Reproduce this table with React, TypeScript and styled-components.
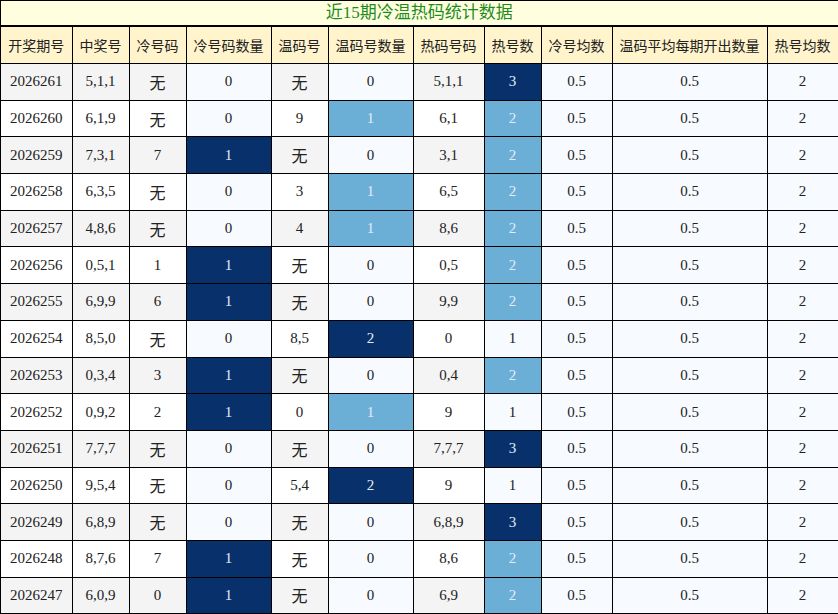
import React from "react";
import styled, { createGlobalStyle } from "styled-components";

const Global = createGlobalStyle`
  html, body { margin: 0; padding: 0; background: #fff; }
  body { font-family: "Liberation Serif", "Noto Sans CJK SC", serif; }
`;

const Table = styled.table`
  width: 838px;
  border-collapse: collapse;
  table-layout: fixed;
  font-family: "Liberation Serif", "Noto Sans CJK SC", serif;
  font-size: 15px;
  color: #222;
`;

const TitleCell = styled.th`
  height: 24px;
  padding: 0;
  background: #ffffe0;
  color: #1c8c1c;
  font-weight: normal;
  font-size: 17px;
  line-height: 24px;
  border: 1px solid #000;
  border-bottom-width: 2px;
  text-align: center;
  vertical-align: middle;
`;

const HeadCell = styled.th`
  height: 36px;
  padding: 0;
  background: #fff4cc;
  font-family: "Noto Sans CJK SC", sans-serif;
  font-weight: normal;
  font-size: 14px;
  color: #222;
  border: 1px solid #000;
  text-align: center;
  white-space: nowrap;
`;

type Tone = "plain" | "count" | 0 | 1 | 2;

const bgFor = (tone: Tone, odd: boolean) => {
  if (tone === "plain") return odd ? "#f4f4f4" : "#ffffff";
  if (tone === 1) return "#6baed6";
  if (tone === 2) return "#08306b";
  return "#f7fbff";
};

const Cell = styled.td<{ $tone: Tone; $odd: boolean }>`
  height: 35.7px;
  padding: 0;
  border: 1px solid #000;
  text-align: center;
  vertical-align: middle;
  background: ${(p) => bgFor(p.$tone, p.$odd)};
  color: ${(p) => (p.$tone === 1 || p.$tone === 2 ? "#e4ecf6" : "#222")};
`;

const None = styled.span`
  font-family: "Noto Sans CJK SC", sans-serif;
  font-size: 16px;
`;

const widths = [71.5, 57, 57, 85, 57, 85, 71, 57, 71, 155, 71];
const heads = [
  "开奖期号",
  "中奖号",
  "冷号码",
  "冷号码数量",
  "温码号",
  "温码号数量",
  "热码号码",
  "热号数",
  "冷号均数",
  "温码平均每期开出数量",
  "热号均数",
];

type Row = [string, string, string, number, string, number, string, number];

const rows: Row[] = [
  ["2026261", "5,1,1", "无", 0, "无", 0, "5,1,1", 3],
  ["2026260", "6,1,9", "无", 0, "9", 1, "6,1", 2],
  ["2026259", "7,3,1", "7", 1, "无", 0, "3,1", 2],
  ["2026258", "6,3,5", "无", 0, "3", 1, "6,5", 2],
  ["2026257", "4,8,6", "无", 0, "4", 1, "8,6", 2],
  ["2026256", "0,5,1", "1", 1, "无", 0, "0,5", 2],
  ["2026255", "6,9,9", "6", 1, "无", 0, "9,9", 2],
  ["2026254", "8,5,0", "无", 0, "8,5", 2, "0", 1],
  ["2026253", "0,3,4", "3", 1, "无", 0, "0,4", 2],
  ["2026252", "0,9,2", "2", 1, "0", 1, "9", 1],
  ["2026251", "7,7,7", "无", 0, "无", 0, "7,7,7", 3],
  ["2026250", "9,5,4", "无", 0, "5,4", 2, "9", 1],
  ["2026249", "6,8,9", "无", 0, "无", 0, "6,8,9", 3],
  ["2026248", "8,7,6", "7", 1, "无", 0, "8,6", 2],
  ["2026247", "6,0,9", "0", 1, "无", 0, "6,9", 2],
];

const coldTone = (n: number): Tone => (n >= 1 ? 2 : 0);
const warmTone = (n: number): Tone => (n >= 2 ? 2 : n === 1 ? 1 : 0);
const hotTone = (n: number): Tone => (n >= 3 ? 2 : n === 2 ? 1 : 0);

const Txt = ({ v }: { v: string }) => (v === "无" ? <None>无</None> : <>{v}</>);

export default function App() {
  return (
    <>
      <Global />
      <Table>
        <colgroup>
          {widths.map((w, i) => (
            <col key={i} style={{ width: w }} />
          ))}
        </colgroup>
        <thead>
          <tr>
            <TitleCell colSpan={11}>近15期冷温热码统计数据</TitleCell>
          </tr>
          <tr>
            {heads.map((h) => (
              <HeadCell key={h}>{h}</HeadCell>
            ))}
          </tr>
        </thead>
        <tbody>
          {rows.map((r, i) => {
            const odd = i % 2 === 0;
            return (
              <tr key={r[0]}>
                <Cell $tone="plain" $odd={odd}>{r[0]}</Cell>
                <Cell $tone="plain" $odd={odd}>{r[1]}</Cell>
                <Cell $tone="plain" $odd={odd}><Txt v={r[2]} /></Cell>
                <Cell $tone={coldTone(r[3])} $odd={odd}>{r[3]}</Cell>
                <Cell $tone="plain" $odd={odd}><Txt v={r[4]} /></Cell>
                <Cell $tone={warmTone(r[5])} $odd={odd}>{r[5]}</Cell>
                <Cell $tone="plain" $odd={odd}>{r[6]}</Cell>
                <Cell $tone={hotTone(r[7])} $odd={odd}>{r[7]}</Cell>
                <Cell $tone="count" $odd={odd}>0.5</Cell>
                <Cell $tone="count" $odd={odd}>0.5</Cell>
                <Cell $tone="count" $odd={odd}>2</Cell>
              </tr>
            );
          })}
        </tbody>
      </Table>
    </>
  );
}
